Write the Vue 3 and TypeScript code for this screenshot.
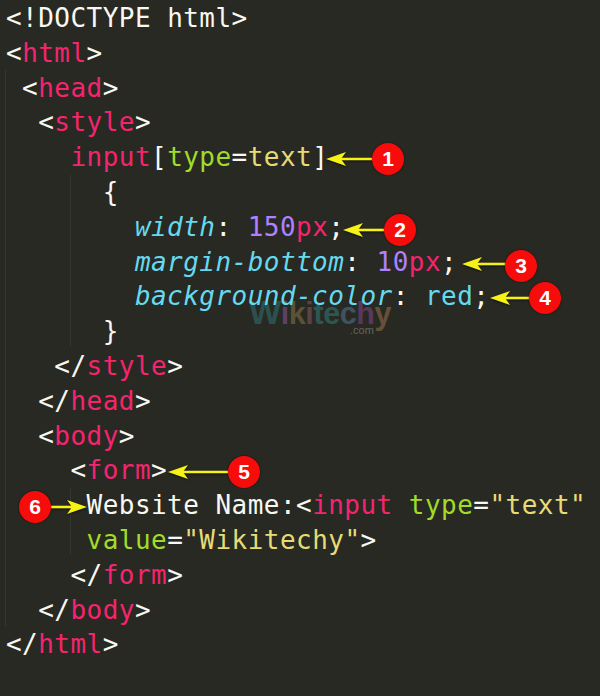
<script setup lang="ts">
type Tok = [string, string]
interface Line { ind: number; toks: Tok[] }
const P = 'p', W = 'w', G = 'g', Y = 'y', C = 'c', I = 'i', V = 'v'
const PITCH = 16.11
const lines: Line[] = [
  { ind: 0, toks: [['<!DOCTYPE html>', W]] },
  { ind: 0, toks: [['<', W], ['html', P], ['>', W]] },
  { ind: 1, toks: [['<', W], ['head', P], ['>', W]] },
  { ind: 2, toks: [['<', W], ['style', P], ['>', W]] },
  { ind: 4, toks: [['input', P], ['[', W], ['type', G], ['=', W], ['text', Y], [']', W]] },
  { ind: 6, toks: [['{', W]] },
  { ind: 8, toks: [['width', I], [': ', W], ['150', V], ['px', P], [';', W]] },
  { ind: 8, toks: [['margin-bottom', I], [': ', W], ['10', V], ['px', P], [';', W]] },
  { ind: 8, toks: [['background-color', I], [': ', W], ['red', C], [';', W]] },
  { ind: 6, toks: [['}', W]] },
  { ind: 3, toks: [['</', W], ['style', P], ['>', W]] },
  { ind: 2, toks: [['</', W], ['head', P], ['>', W]] },
  { ind: 2, toks: [['<', W], ['body', P], ['>', W]] },
  { ind: 4, toks: [['<', W], ['form', P], ['>', W]] },
  { ind: 5, toks: [['Website Name:<', W], ['input', P], [' ', W], ['type', G], ['=', W], ['"text"', Y]] },
  { ind: 5, toks: [['value', G], ['=', W], ['"Wikitechy"', Y], ['>', W]] },
  { ind: 4, toks: [['</', W], ['form', P], ['>', W]] },
  { ind: 2, toks: [['</', W], ['body', P], ['>', W]] },
  { ind: 0, toks: [['</', W], ['html', P], ['>', W]] },
]
const arrows = [
  { tail: 373, tip: 326, y: 159, by: 159, n: 1, cx: 388 },
  { tail: 385, tip: 343, y: 230, by: 230, n: 2, cx: 400 },
  { tail: 506, tip: 462, y: 264, by: 266, n: 3, cx: 521 },
  { tail: 530, tip: 490, y: 298, by: 298, n: 4, cx: 545 },
  { tail: 229, tip: 168, y: 472, by: 472, n: 5, cx: 244 },
  { tail: 50, tip: 87, y: 507, by: 507, n: 6, cx: 35 },
]
function head(tip: number, tail: number, y: number): string {
  const d = tail > tip ? 1 : -1
  return `${tip},${y} ${tip + d * 20},${y - 7} ${tip + d * 15},${y} ${tip + d * 20},${y + 7}`
}
const markLetters: Tok[] = [
  ['W', '#2c504e'], ['i', '#5c4260'], ['k', '#5a5236'], ['i', '#5c4242'], ['t', '#2c5652'],
  ['e', '#2c5652'], ['c', '#405260'], ['h', '#5a385c'], ['y', '#665038'],
]
</script>

<template>
  <div class="page">
    <div class="guide g1"></div>
    <div class="guide g2"></div>
    <div class="guide g3"></div>
    <div class="mark">
      <span class="mw"><span v-for="(m, i) in markLetters" :key="i" :class="{ big: i === 0 }" :style="{ color: m[1] }">{{ m[0] }}</span></span>
      <span class="mc">.com</span>
    </div>
    <div class="code">
      <div v-for="(l, i) in lines" :key="i" class="line" :style="{ paddingLeft: l.ind * PITCH + 'px' }"><span v-for="(t, j) in l.toks" :key="j" :class="t[1]">{{ t[0] }}</span></div>
    </div>
    <svg class="arrows" width="600" height="696" viewBox="0 0 600 696">
      <g v-for="a in arrows" :key="a.n" class="arrow">
        <line :x1="a.tail" :y1="a.y" :x2="a.tip + (a.tail > a.tip ? 14 : -14)" :y2="a.y" stroke="#f6f116" stroke-width="2.6" />
        <polygon :points="head(a.tip, a.tail, a.y)" fill="#f6f116" />
      </g>
    </svg>
    <div v-for="a in arrows" :key="'b' + a.n" class="badge" :style="{ left: a.cx - 16 + 'px', top: a.by - 16 + 'px' }">{{ a.n }}</div>
  </div>
</template>

<style scoped>
.page { position: relative; width: 600px; height: 696px; background: #282923; overflow: hidden; }
.code { position: relative; padding: 1px 0 0 6px; font-family: "DejaVu Sans Mono", monospace; font-size: 26px; letter-spacing: 0.46px; color: #f8f8f2; }
.line { height: 34.8px; line-height: 34.8px; white-space: pre; }
.w { color: #f8f8f2; }
.p { color: #f5246f; }
.g { color: #a0dc28; }
.y { color: #e6db74; }
.c { color: #66d9ef; }
.i { color: #66d9ef; font-style: italic; }
.v { color: #ae81ff; }
.guide { position: absolute; width: 1px; background: #35362f; }
.g1 { left: 5px; top: 70px; height: 556px; }
.g2 { left: 70px; top: 175px; height: 172px; }
.g3 { left: 70px; top: 488px; height: 67px; }
.mark { position: absolute; left: 249px; top: 292px; width: 145px; height: 50px; font-family: "Liberation Sans", sans-serif; }
.mw { position: absolute; left: 0; top: 2px; font-size: 30.5px; line-height: 36px; font-weight: 700; letter-spacing: -0.4px; white-space: nowrap; }
.big { font-size: 34px; }
.mc { position: absolute; left: 101px; top: 31px; font-size: 11px; line-height: 14px; color: #65655e; }
.arrows { position: absolute; left: 0; top: 0; }
.arrow { filter: drop-shadow(0 1px 1px rgba(0, 0, 0, 0.6)); }
.badge { position: absolute; width: 32px; height: 32px; border-radius: 50%; background: #f70c0c; box-shadow: 0 0 2px rgba(0, 0, 0, 0.7); color: #fff; font: 700 21px/32px "Liberation Sans", sans-serif; text-align: center; }
</style>
